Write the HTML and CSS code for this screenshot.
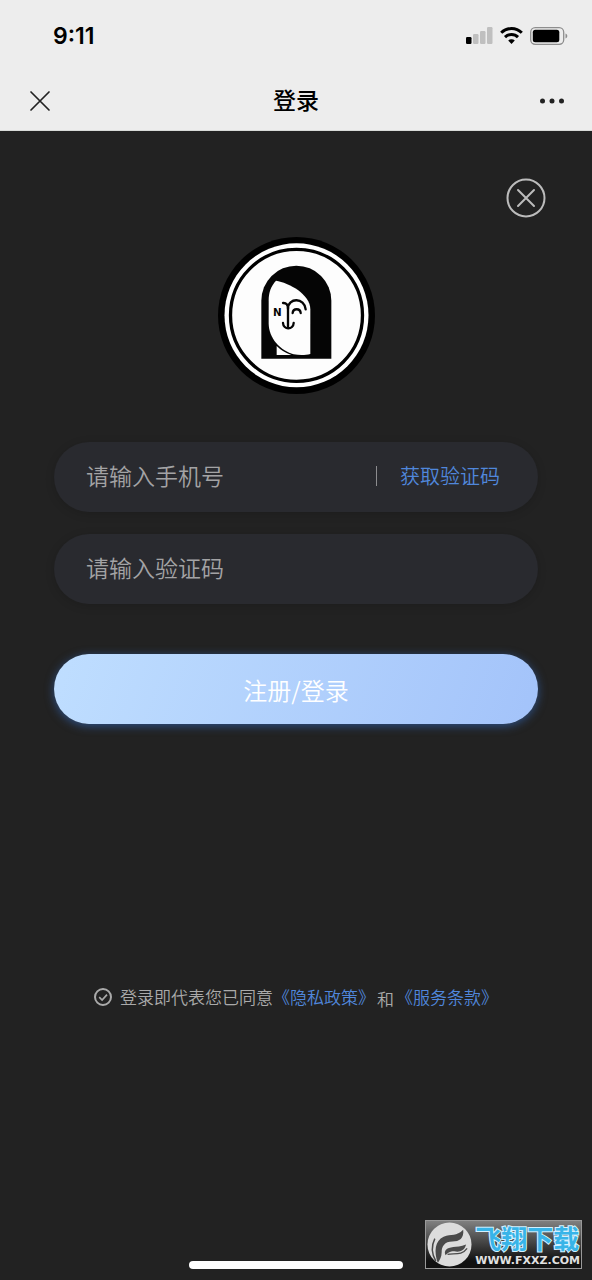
FILE: index.html
```html
<!DOCTYPE html>
<html lang="zh-CN">
<head>
<meta charset="utf-8">
<meta name="viewport" content="width=device-width, initial-scale=1">
<title>登录</title>
<link rel="stylesheet" href="styles.css">
</head>
<body>
<div class="page">
  <header class="top">
    <div class="status">
      <span class="time">9:11</span>
      <div class="status-icons">
        <svg width="27" height="17" viewBox="0 0 27 17" aria-hidden="true">
          <rect x="0" y="10" width="5.500" height="7" rx="1.200" fill="#000"/>
          <g fill="#bfbfbf"><rect x="7" y="7" width="5.500" height="10" rx="1.200"/><rect x="14" y="4" width="5.500" height="13" rx="1.200"/><rect x="21" y="0" width="5.500" height="17" rx="1.200"/></g>
        </svg>
        <svg width="23" height="17" viewBox="0 0 23 17" aria-hidden="true">
          <g fill="none" stroke="#000" stroke-width="3"><path d="M1.200 5.800a14.600 14.600 0 0 1 20.600 0"/><path d="M5 10.100a9.200 9.200 0 0 1 13 0"/></g>
          <path d="M11.500 17l-3.300-3.400a4.700 4.700 0 0 1 6.600 0z" fill="#000"/>
        </svg>
        <svg width="38" height="18" viewBox="0 0 38 18" aria-hidden="true">
          <rect x=".7" y=".7" width="33" height="16.600" rx="4.500" fill="none" stroke="#8e8e8e" stroke-width="1.300"/>
          <rect x="2.800" y="2.800" width="26.500" height="12.400" rx="2.500" fill="#000"/>
          <path d="M35.500 6.500c2.400.7 2.400 4.300 0 5z" fill="#8e8e8e"/>
        </svg>
      </div>
    </div>
    <nav class="nav">
      <button class="icon-button" type="button" aria-label="关闭">
        <svg width="26" height="26" viewBox="-3 -3 26 26"><path d="M1 1l18 18M19 1L1 19" stroke="#222" stroke-width="1.700" stroke-linecap="round"/></svg>
      </button>
      <h1 class="title">登录</h1>
      <button class="icon-button icon-button-end" type="button" aria-label="更多">
        <svg width="26" height="6" viewBox="0 0 26 6" fill="#222"><circle cx="3.500" cy="3" r="2.500"/><circle cx="13" cy="3" r="2.500"/><circle cx="22.500" cy="3" r="2.500"/></svg>
      </button>
    </nav>
  </header>

  <main class="main">
    <div class="dismiss">
      <button class="icon-button" type="button" aria-label="关闭登录">
        <svg width="40" height="40" viewBox="0 0 40 40" fill="none" stroke="#bcbcbc" stroke-width="2" stroke-linecap="round"><circle cx="20" cy="20" r="18.500"/><path d="M12 12l16 16M28 12L12 28"/></svg>
      </button>
    </div>

    <svg class="logo" viewBox="23 21 471 471" role="img" aria-label="标志">
      <circle cx="258.500" cy="256.500" r="235.500" fill="#000"/>
      <circle cx="258.500" cy="256" r="216" fill="#fff"/>
      <circle cx="258.500" cy="256" r="198" fill="#fdfdfd" stroke="#000" stroke-width="10"/>
      <path d="M153 386V212a105 105 0 0 1 210 0v174z" fill="#050505"/>
      <path d="M197 152C235 158 300 192 300 238V372C286 376 266 376 250 373C210 362 175 325 175 280V212C175 186 182 168 197 152z" fill="#fdfdfd"/>
      <path d="M199 348V375H243Q217 366 199 348z" fill="#fdfdfd"/>
      <g fill="none" stroke="#050505" stroke-width="7" stroke-linecap="round">
        <path d="M218 219c10-1 15 6 15 17v58"/>
        <path d="M233 236c0-34 50-34 53 2"/>
        <path d="M247 249c1-15 23-15 24 0"/>
        <path d="M218 279c1 21 31 21 32 0"/>
      </g>
      <text class="logo-letter" x="188" y="257">N</text>
    </svg>

    <form class="form">
      <div class="fields">
        <div class="field">
          <input class="input" type="tel" aria-label="手机号" placeholder="请输入手机号">
          <button class="code-button" type="button">获取验证码</button>
        </div>
        <div class="field">
          <input class="input" type="text" aria-label="验证码" placeholder="请输入验证码">
        </div>
      </div>
      <button class="submit" type="button">注册/登录</button>
    </form>

    <div class="agreement">
      <label class="consent">
        <span class="tick">
          <input class="tick-box" type="checkbox" checked>
          <svg class="tick-mark" width="18" height="18" viewBox="0 0 18 18" fill="none" stroke="#aaa" stroke-width="1.700" aria-hidden="true"><path d="M5.200 9.200l2.900 2.800L13 6.600"/></svg>
        </span>
        <span>登录即代表您已同意</span>
      </label>
      <a class="link" href="#privacy">《隐私政策》</a>
      <span class="and">和</span>
      <a class="link" href="#terms">《服务条款》</a>
    </div>
  </main>

  <div class="home-bar"></div>

  <div class="watermark">
    <svg class="mark-icon" viewBox="0 0 46 46" aria-hidden="true">
      <circle cx="23" cy="23" r="22.500" fill="#dcdcdc"/>
      <path d="M11 42C7 30 8 19 17 15C25 12 30 15 37 8C38 17 33 20 26 20C18 20 15 25 15 31C15 36 13 39 11 42z" fill="#4a4a4a"/>
      <path d="M19 29C23 24 29 27 40 23C38 30 33 31 28 30C23 30 21 32 19 34C18 32 18 31 19 29z" fill="#4a4a4a"/>
      <path d="M21 33C29 32 36 34 41 27" fill="none" stroke="#4a4a4a" stroke-width="1.300"/>
      <path d="M8 17C4 25 5 33 9 40" fill="none" stroke="#4a4a4a" stroke-width="1.500"/>
    </svg>
    <div class="mark-text">
      <span class="mark-name">飞翔下载</span>
      <span class="mark-site">WWW.FXXZ.COM</span>
    </div>
  </div>
</div>
</body>
</html>
```

FILE: styles.css
```css
* {
  box-sizing: border-box;
}

body {
  margin: 0;
  background: #222;
  color: #aaa;
  font-family: "Noto Sans CJK SC", sans-serif;
  font-weight: 350;
}

button,
input {
  margin: 0;
  padding: 0;
  border: 0;
  background: none;
  color: inherit;
  font: inherit;
}

svg {
  display: block;
}

.page {
  position: relative;
  display: flex;
  flex-direction: column;
  min-height: 100vh;
}

.top {
  background: #ededed;
  color: #000;
  border-bottom: 1px solid #d8dad8;
}

.status {
  display: flex;
  align-items: center;
  justify-content: space-between;
  height: 71px;
  padding: 0 24px 0 53px;
}

.time {
  font: 600 23px/28px Inter, sans-serif;
}

.status-icons {
  display: flex;
  align-items: center;
  gap: 7px;
}

.nav {
  display: grid;
  grid-template-columns: 1fr auto 1fr;
  align-items: center;
  height: 59px;
  padding: 0 27px;
}

.icon-button {
  justify-self: start;
}

.icon-button-end {
  justify-self: end;
}

.title {
  margin: 0;
  padding-bottom: 3px;
  font-size: 23px;
  line-height: 32px;
  font-weight: 500;
}

.main {
  display: flex;
  flex-direction: column;
  padding: 47px 54px 0;
}

.dismiss {
  display: flex;
  justify-content: flex-end;
  margin-right: -8px;
}

.logo {
  width: 157px;
  height: 157px;
  margin: 19px auto 0;
}

.logo-letter {
  fill: #050505;
  font: 700 31px "DejaVu Sans", sans-serif;
}

.form {
  margin-top: 48px;
}

.fields {
  display: grid;
  gap: 22px;
}

.field {
  display: flex;
  align-items: center;
  height: 70px;
  padding: 0 38px 2px 32px;
  border-radius: 35px;
  background: #292a2f;
  box-shadow: 0 2px 10px rgba(0, 0, 0, 0.15);
}

.input {
  flex: 1;
  min-width: 0;
  height: 40px;
  padding-bottom: 2px;
  font-size: 23px;
  outline: none;
}

.input::placeholder {
  color: #a3a3a5;
  opacity: 1;
}

.code-button {
  padding-left: 23px;
  border-left: 1px solid #8c8c8f;
  color: #5087dc;
  font-size: 20px;
  line-height: 20px;
}

.submit {
  display: block;
  width: 100%;
  height: 70px;
  margin-top: 50px;
  border-radius: 35px;
  background: linear-gradient(110deg, #bfdeff, #a3c3fa);
  box-shadow: 0 2px 10px rgba(54, 112, 200, 0.6);
  color: #fff;
  font-size: 24px;
}

.agreement {
  display: flex;
  flex-wrap: wrap;
  align-items: center;
  justify-content: center;
  margin-top: 259px;
  font-size: 17px;
  line-height: 24px;
}

.consent {
  display: flex;
  align-items: center;
  gap: 8px;
}

.tick {
  display: grid;
}

.tick-box,
.tick-mark {
  grid-area: 1 / 1;
}

.tick-box {
  appearance: none;
  width: 18px;
  height: 18px;
  border: 2px solid #aaa;
  border-radius: 50%;
}

.tick-mark {
  pointer-events: none;
}

.link {
  color: #5087dc;
  text-decoration: none;
}

.and {
  padding: 4px 2px 0;
}

.home-bar {
  width: 36%;
  height: 8px;
  margin: auto auto 11px;
  border-radius: 4px;
  background: #fff;
}

.watermark {
  position: absolute;
  right: 10px;
  bottom: 11px;
  display: flex;
  align-items: center;
  gap: 3px;
  height: 49px;
  padding: 0 1px;
  border: 1px solid #999;
  background: linear-gradient(#808080, #111 85%);
}

.mark-icon {
  width: 45px;
  height: 45px;
}

.mark-text {
  display: grid;
  gap: 2px;
}

.mark-name {
  color: #38b4e8;
  font-size: 26px;
  line-height: 31px;
  font-weight: 700;
  -webkit-text-stroke: 2px #d4f1ff;
  paint-order: stroke fill;
}

.mark-site {
  color: #e2e2e2;
  font: 700 11px/12px "DejaVu Sans", sans-serif;
}
```
